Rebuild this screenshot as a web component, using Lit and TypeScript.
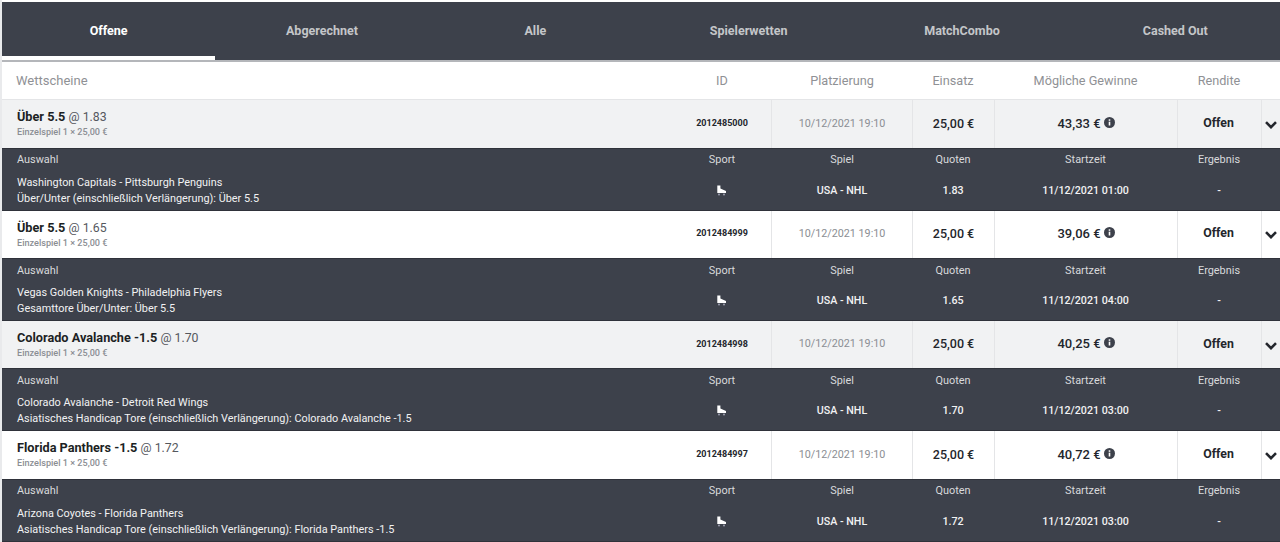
import { LitElement, html, css, svg } from "lit";
import { customElement } from "lit/decorators.js";

const tabs = ["Offene", "Abgerechnet", "Alle", "Spielerwetten", "MatchCombo", "Cashed Out"];
const bets = [
  { pick: "Über 5.5", odds: "1.83", id: "2012485000", win: "43,33 €", match: "Washington Capitals - Pittsburgh Penguins", market: "Über/Unter (einschließlich Verlängerung): Über 5.5", start: "11/12/2021 01:00", alt: true },
  { pick: "Über 5.5", odds: "1.65", id: "2012484999", win: "39,06 €", match: "Vegas Golden Knights - Philadelphia Flyers", market: "Gesamttore Über/Unter: Über 5.5", start: "11/12/2021 04:00", alt: false },
  { pick: "Colorado Avalanche -1.5", odds: "1.70", id: "2012484998", win: "40,25 €", match: "Colorado Avalanche - Detroit Red Wings", market: "Asiatisches Handicap Tore (einschließlich Verlängerung): Colorado Avalanche -1.5", start: "11/12/2021 03:00", alt: true },
  { pick: "Florida Panthers -1.5", odds: "1.72", id: "2012484997", win: "40,72 €", match: "Arizona Coyotes - Florida Panthers", market: "Asiatisches Handicap Tore (einschließlich Verlängerung): Florida Panthers -1.5", start: "11/12/2021 03:00", alt: false },
];

const skate = svg`<svg class="skate" width="10" height="11" viewBox="0 0 10 11"><path d="M0.3 0.5H3.4V3.6L9 6V8H0.3Z" fill="#fff"/><circle cx="2" cy="9.5" r="0.9" fill="#aab"/><circle cx="7" cy="9.5" r="0.9" fill="#aab"/></svg>`;
const info = svg`<svg class="info" width="11" height="11" viewBox="0 0 11 11"><circle cx="5.5" cy="5.5" r="5.5" fill="#3d414b"/><rect x="4.7" y="4.7" width="1.6" height="3.8" fill="#fff"/><rect x="4.7" y="2.3" width="1.6" height="1.5" fill="#fff"/></svg>`;
const chevron = svg`<svg width="12" height="8" viewBox="0 0 12 8"><path d="M1 1.2L6 6.2L11 1.2" fill="none" stroke="#23262c" stroke-width="2.6"/></svg>`;

@customElement("app-root")
export class AppRoot extends LitElement {
  static styles = css`
    :host { display: block; height: 542px; overflow: hidden; background: #fff; font-family: Roboto, "Liberation Sans", sans-serif; padding: 2px 0 0 2px; box-sizing: border-box; box-shadow: inset 2px 0 0 #e9eaec; }
    .tabs { display: grid; grid-template-columns: repeat(6, 1fr); height: 58px; background: #3d414b; border-bottom: 2px solid #b4b6ba; width: 1280px; }
    .tab { display: flex; align-items: center; justify-content: center; color: #c4c6c9; font-size: 12.5px; font-weight: 700; padding-bottom: 1px; box-sizing: border-box; }
    .tab.active { color: #fff; box-shadow: inset 0 -4px 0 #fff; }
    .grid { display: grid; grid-template-columns: 669px 100px 141px 82px 183px 84px 19px; }
    .head { height: 37.4px; align-items: center; border-bottom: 1px solid #e4e5e7; color: #8f9195; font-size: 12.7px; text-align: center; }
    .head div:first-child { text-align: left; padding-left: 14px; font-size: 13px; }
    .head .c2, .detail .c2 { padding-left: 2px; }
    .head .c3, .detail .c3 { padding-left: 1px; }
    .row { height: 47.33px; align-items: stretch; color: #23262c; }
    .row.alt { background: #f1f2f3; }
    .row > div { display: flex; align-items: center; justify-content: center; border-left: 1px solid #e4e5e7; padding-bottom: 2px; box-sizing: border-box; }
    .row > .main { display: block; border-left: 0; padding: 9px 0 0 15px; }
    .row > .chev { padding: 2px 0 0; }
    .row > .id { font-size: 9px; font-weight: 700; border-left: 0; padding-left: 2px; }
    .pick { font-size: 12.7px; line-height: 16px; font-weight: 700; color: #1c1f24; white-space: nowrap; }
    .at { font-weight: 400; color: #55585e; font-size: 12.3px; }
    .sub { font-size: 9.1px; line-height: 12px; font-weight: 500; color: #8b8e93; margin-top: 1px; }
    .date { font-size: 10.75px; color: #8b8e93; }
    .amt { font-size: 12.5px; font-weight: 500; }
    .win { font-size: 13px; font-weight: 500; gap: 3px; }
    .info { margin-top: -2px; }
    .row > .status { font-size: 12.3px; font-weight: 700; padding-right: 2px; }
    .detail { background: #3d414b; color: #e6e7e8; height: 63px; box-sizing: border-box; border-top: 1px solid #2f323a; border-bottom: 1px solid #2f323a; grid-template-rows: 22px 1fr; font-size: 10.9px; text-align: center; align-items: center; }
    .detail .lbl { color: #d9dadc; }
    .detail .left { text-align: left; padding-left: 15px; }
    .detail .names { line-height: 16px; color: #f2f2f3; font-size: 10.87px; white-space: nowrap; padding-top: 1px; }
    .detail .val { font-weight: 500; font-size: 10.7px; color: #f2f2f3; }
    .skate { display: block; margin: 0 auto; }
  `;

  render() {
    return html`
      <div class="tabs">${tabs.map((t, i) => html`<div class="tab ${i === 0 ? "active" : ""}">${t}</div>`)}</div>
      <div class="grid head">
        <div>Wettscheine</div><div class="c2">ID</div><div class="c3">Platzierung</div><div>Einsatz</div><div>Mögliche Gewinne</div><div>Rendite</div><div></div>
      </div>
      ${bets.map((b) => html`
        <div class="grid row ${b.alt ? "alt" : ""}">
          <div class="main">
            <div class="pick">${b.pick} <span class="at">@ ${b.odds}</span></div>
            <div class="sub">Einzelspiel 1 × 25,00 €</div>
          </div>
          <div class="id">${b.id}</div>
          <div class="date">10/12/2021 19:10</div>
          <div class="amt">25,00 €</div>
          <div class="win">${b.win} ${info}</div>
          <div class="status">Offen</div>
          <div class="chev">${chevron}</div>
        </div>
        <div class="grid detail">
          <div class="lbl left">Auswahl</div><div class="lbl c2">Sport</div><div class="lbl c3">Spiel</div><div class="lbl">Quoten</div><div class="lbl">Startzeit</div><div class="lbl">Ergebnis</div><div></div>
          <div class="left names">${b.match}<br />${b.market}</div>
          <div class="val c2">${skate}</div>
          <div class="val c3">USA - NHL</div>
          <div class="val">${b.odds}</div>
          <div class="val">${b.start}</div>
          <div class="val">-</div><div></div>
        </div>
      `)}
    `;
  }
}
